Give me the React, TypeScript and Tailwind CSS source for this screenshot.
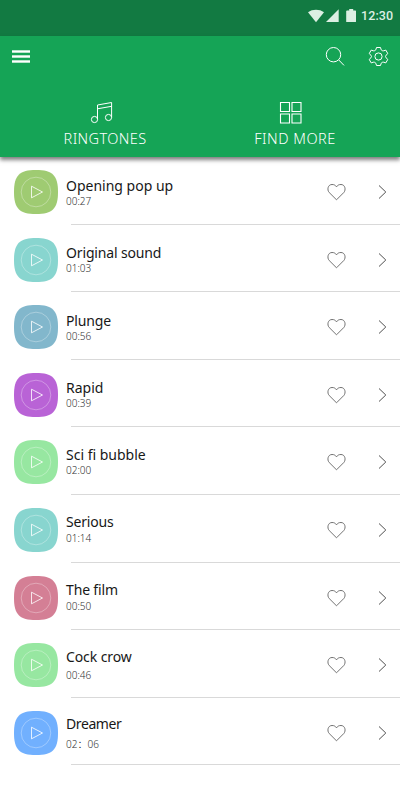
import { Fragment } from 'react'

type Ringtone = {
  title: string
  time: string
  color: string
  titleClass: string
  timeClass: string
}

const ringtones: Ringtone[] = [
  { title: 'Opening pop up', time: '00:27', color: 'text-[#9fcb72]', titleClass: 'pt-[19px]', timeClass: '-mt-[2px]' },
  { title: 'Original sound', time: '01:03', color: 'text-[#88d5cf]', titleClass: 'pt-[18px] tracking-[-0.15px]', timeClass: '-mt-[2px]' },
  { title: 'Plunge', time: '00:56', color: 'text-[#82b7cc]', titleClass: 'pt-[18.4px] tracking-[-0.15px]', timeClass: '-mt-[1.4px]' },
  { title: 'Rapid', time: '00:39', color: 'text-[#b963d6]', titleClass: 'pt-[18px]', timeClass: '-mt-[2px]' },
  { title: 'Sci fi bubble', time: '02:00', color: 'text-[#97e7a1]', titleClass: 'pt-[18px]', timeClass: '-mt-[2px]' },
  { title: 'Serious', time: '01:14', color: 'text-[#88d5cf]', titleClass: 'pt-[17px] tracking-[-0.2px]', timeClass: '-mt-[1px]' },
  { title: 'The film', time: '00:50', color: 'text-[#d47f95]', titleClass: 'pt-[17px] tracking-[-0.15px]', timeClass: '-mt-[1px]' },
  { title: 'Cock crow', time: '00:46', color: 'text-[#97e7a1]', titleClass: 'pt-[17px] tracking-[-0.1px]', timeClass: 'mt-[1px]' },
  { title: 'Dreamer', time: '02：06', color: 'text-[#71b0fe]', titleClass: 'pt-[16px] tracking-[-0.4px]', timeClass: 'mt-[3px]' },
]

function StatusBar() {
  return (
    <div className="flex h-9 items-start bg-[#127a42] pl-[308px] text-[#dcefe3]">
      <svg className="mt-[9px] h-[14px] w-[57px] shrink-0" viewBox="0 0 57 14" fill="currentColor">
        <path d="M0 3.2C4.5-.1 11.5-.1 16 3.2L8 13.3Z" />
        <path d="M30.700 .3V13H18Z" />
        <path d="M40 1.500h2V0h4v1.500h2.200q.6 0 .6.600v10.300q0 .6-.6.600H39V2.100q0-.6 1-.6Z" transform="translate(-.8)" />
      </svg>
      <span className="-ml-[4px] mt-[6px] font-['Roboto',sans-serif] text-[12.5px] font-medium leading-5 tracking-[0.1px]">12:30</span>
    </div>
  )
}

function MusicIcon() {
  return (
    <svg className="h-6 w-6" viewBox="0 0 24 24" fill="none" stroke="currentColor" strokeWidth="1">
      <circle cx="4.500" cy="18.500" r="3.100" />
      <circle cx="18.500" cy="16.500" r="3.100" />
      <path d="M7.500 18.500V4L21.600 1.500V16.500M7.500 7.800 21.600 5.300" />
    </svg>
  )
}

function GridIcon() {
  return (
    <svg className="h-6 w-6" viewBox="0 0 24 24" fill="none" stroke="currentColor" strokeWidth="1.1">
      <path d="M1.500 1.500h9v9h-9zM13 1.500h9v9h-9zM1.500 13h9v9h-9zM13 13h9v9h-9z" />
    </svg>
  )
}

function Header() {
  return (
    <header className="relative h-[121px] bg-[#15a456] text-white shadow-[0_3px_4px_rgba(0,0,0,0.5)]">
      <div className="flex items-start justify-between pl-3 pr-[11px] pt-[10px]">
        <div className="mt-1 flex w-[18px] flex-col gap-[2px]">
          <div className="h-[3px] border-y border-white/70 bg-white bg-clip-content" />
          <div className="h-[3px] border-y border-white/70 bg-white bg-clip-content" />
          <div className="h-[3px] border-y border-white/70 bg-white bg-clip-content" />
        </div>
        <div className="flex gap-[22px]">
          <svg className="h-[21px] w-[21px]" viewBox="0 0 21 21" fill="none" stroke="currentColor" strokeWidth="1">
            <circle cx="8.500" cy="8.700" r="7.200" />
            <path d="m13.700 13.900 5.300 5.500" />
          </svg>
          <svg className="h-[21px] w-[21px]" viewBox="0 0 21 21" fill="none" stroke="currentColor" strokeWidth="1" strokeLinejoin="round">
            <circle cx="10.500" cy="10.500" r="3.600" />
            <path d="M8.500 1.500h4q.4 2.900 1.800 3.200 1.200.5 3.500-.6l2 3.500q-2.300 1.700-2.300 2.900t2.300 2.900l-2 3.500q-2.300-1.100-3.500-.6-1.400.3-1.800 3.200h-4q-.4-2.900-1.800-3.200-1.200-.5-3.500.6l-2-3.500q2.300-1.700 2.300-2.900T1.200 7.600l2-3.500q2.300 1.100 3.500.6 1.400-.3 1.800-3.200Z" />
          </svg>
        </div>
      </div>
      <nav className="mt-[34px] flex pl-[10px] text-[14.5px] leading-5">
        <div className="flex w-[190px] flex-col items-center gap-[3px]">
          <div className="-ml-[6px]"><MusicIcon /></div>
          <span className="tracking-[0.4px] font-light">RINGTONES</span>
        </div>
        <div className="flex w-[190px] flex-col items-center gap-[3px]">
          <div className="-ml-[8px]"><GridIcon /></div>
          <span className="tracking-[0.5px] font-light">FIND MORE</span>
        </div>
      </nav>
    </header>
  )
}

function PlayTile({ color }: { color: string }) {
  return (
    <svg className={`mt-[13px] h-[44px] w-[44px] shrink-0 ${color}`} viewBox="0 0 44 44" fill="none">
      <path fill="currentColor" d="M22 0C38.500 0 44 5.500 44 22S38.500 44 22 44 0 38.500 0 22 5.500 0 22 0Z" />
      <circle cx="22" cy="22" r="14.800" stroke="white" strokeOpacity=".4" strokeWidth=".8" />
      <path d="M17.500 16.200v11.600L28.500 22Z" stroke="white" strokeOpacity=".9" strokeWidth=".9" />
    </svg>
  )
}

function RingtoneRow({ item }: { item: Ringtone }) {
  return (
    <div className="flex h-[66.6px] items-start pl-[14px] pr-[13px]">
      <PlayTile color={item.color} />
      <div className="ml-[8px] flex-1 whitespace-nowrap">
        <p className={`text-[14px] leading-5 text-[#181818] ${item.titleClass}`}>{item.title}</p>
        <p className={`text-[10px] font-light leading-[14px] text-[#333] ${item.timeClass}`}>{item.time}</p>
      </div>
      <svg className="mt-[26px] h-[18px] w-[20px]" viewBox="0 0 20 18" fill="none" stroke="#626262" strokeWidth=".9">
        <path d="M10.500 16.800 3.200 9.500C.8 6.900 1.900 1.500 6 1.500c2.200 0 3.300.7 4.500 2.300 1.200-1.600 2.300-2.300 4.500-2.300 4.100 0 5.200 5.400 2.800 8Z" />
      </svg>
      <svg className="ml-[31px] mt-[27px] h-4 w-[10px]" viewBox="0 0 10 16" fill="none" stroke="#505050" strokeWidth="1">
        <path d="m2 1.500 6.800 6.500L2 14.500" />
      </svg>
    </div>
  )
}

export default function App() {
  return (
    <div className="h-[800px] w-[400px] overflow-hidden bg-white font-['Noto_Sans','Noto_Sans_CJK_SC',sans-serif]">
      <StatusBar />
      <Header />
      <main>
        {ringtones.map((item) => (
          <Fragment key={item.title}>
            <RingtoneRow item={item} />
            <div className="ml-[71px] h-px bg-[#d9d9d9]" />
          </Fragment>
        ))}
      </main>
    </div>
  )
}
